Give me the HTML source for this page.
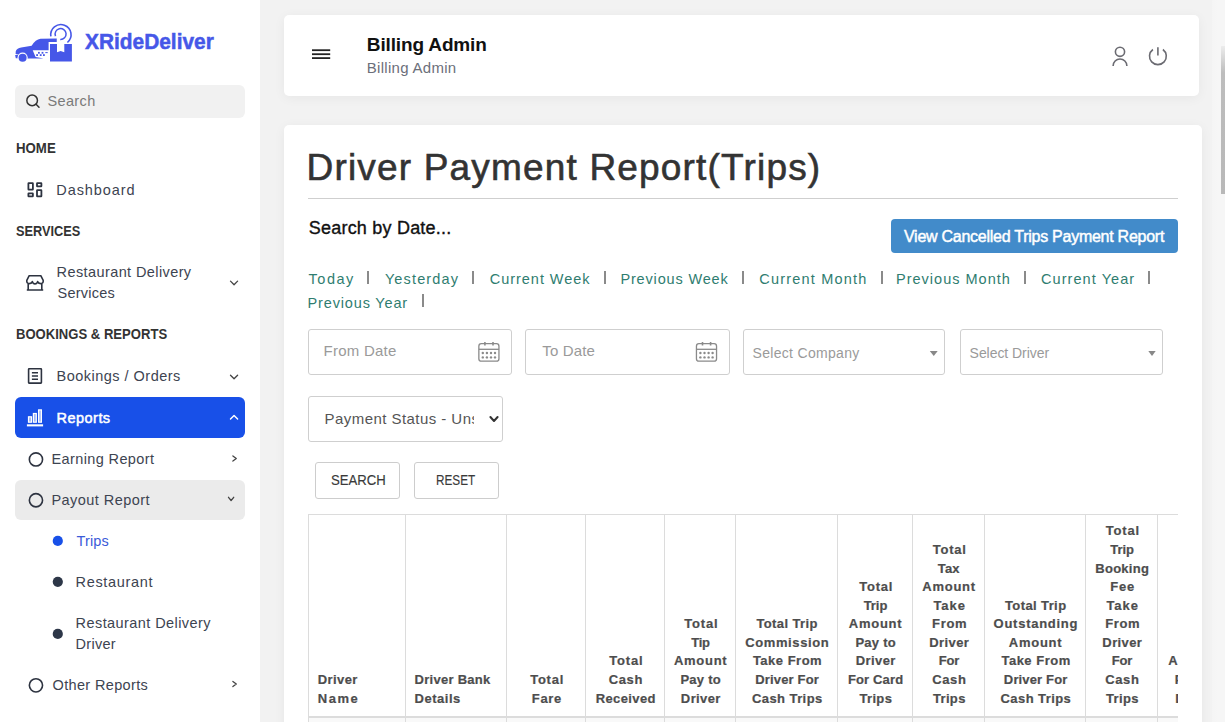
<!DOCTYPE html>
<html><head><meta charset="utf-8"><style>
html,body{margin:0;padding:0;}
body{width:1225px;height:722px;overflow:hidden;position:relative;background:#f2f2f2;font-family:"Liberation Sans", sans-serif;}
.t{position:absolute;white-space:nowrap;font-family:"Liberation Sans", sans-serif;}
.a{position:absolute;}
</style></head><body>
<!-- sidebar -->
<div class="a" style="left:0;top:0;width:260px;height:722px;background:#fff;"></div>
<!-- header card -->
<div class="a" style="left:284px;top:15px;width:915px;height:81px;background:#fff;border-radius:5px;box-shadow:0 2px 12px rgba(0,0,0,0.05);"></div>
<!-- main card -->
<div class="a" style="left:284px;top:125px;width:918px;height:640px;background:#fff;border-radius:5px;box-shadow:0 2px 12px rgba(0,0,0,0.05);"></div>

<!-- logo -->
<svg class="a" style="left:12px;top:20px" width="64" height="46" viewBox="12 20 64 46">
  <path fill="#4657e8" d="M15.6,54 L15.8,51.1 Q17,48.3 21.2,47.5 L31.65,45.7 Q35.5,39.3 40.5,38.7 L56.75,38.6 L56.75,42 L48.6,42 L48.6,50.2 L32.7,50.2 L35.6,56.9 Q40,57.4 43.5,58.5 L26,58.5 L21,55.2 L15.6,54 Z"/>
  <path fill="#4657e8" d="M15.1,55.1 L18,55.1 L18.6,58.3 L15.8,58.3 Z"/>
  <circle cx="22.6" cy="57.6" r="5.1" fill="#fff"/>
  <circle cx="22.6" cy="57.8" r="4" fill="#4657e8"/>
  <g fill="#4657e8">
    <rect x="38" y="51.9" width="1.8" height="1.8"/><rect x="41.6" y="51.9" width="1.8" height="1.8"/>
    <rect x="36.2" y="54.2" width="1.8" height="1.8"/><rect x="39.8" y="54.2" width="1.8" height="1.8"/><rect x="43" y="54.2" width="1.8" height="1.8"/>
    <rect x="45.3" y="52.1" width="2.4" height="1"/>
  </g>
  <path fill="#4657e8" d="M50,44 H57 V52.2 L60.65,51 L64.3,52.2 V44 H71.9 V61.5 H50 Z"/>
  <path d="M50.9,36.4 A10.15,10.15 0 1 1 67.4,42.5" stroke="#4657e8" stroke-width="1.6" fill="none"/>
  <path d="M55.5,36.1 A5.5,5.5 0 1 1 60.25,39.5" stroke="#4657e8" stroke-width="1.5" fill="none"/>
</svg>

<!-- search box -->
<div class="a" style="left:15px;top:85px;width:230px;height:33px;background:#f1f1f1;border-radius:6px;"></div>
<svg class="a" style="left:0;top:0" width="260" height="722" viewBox="0 0 260 722">
  <g fill="none" stroke="#333" stroke-width="1.5">
    <circle cx="32.15" cy="100.4" r="5.3"/>
    <path d="M36.1,104.3 L39,107.3" stroke-linecap="round"/>
  </g>
  <!-- dashboard icon -->
  <g fill="none" stroke="#2d3340" stroke-width="1.8">
    <rect x="28.4" y="183.2" width="4.5" height="6.4" rx="0.3"/>
    <rect x="37" y="183.2" width="4.4" height="3.2" rx="0.3"/>
    <rect x="28.4" y="193.4" width="4.5" height="3" rx="0.3"/>
    <rect x="37" y="190.2" width="4.4" height="6.2" rx="0.3"/>
  </g>
  <!-- store icon -->
  <g fill="none" stroke="#2d3340" stroke-width="1.6" stroke-linejoin="round">
    <path d="M29.2,275.7 H40.8 L43.2,280.4 Q43.6,283.6 40.6,283.6 Q38.2,283.6 37.6,281.6 Q37,283.9 35,283.9 Q33,283.9 32.4,281.6 Q31.8,283.6 29.4,283.6 Q26.4,283.6 26.8,280.4 Z"/>
    <path d="M28.2,284 V290 M41.8,284 V290 M26.8,290 H43.2"/>
  </g>
  <!-- bookings icon -->
  <g fill="none" stroke="#2d3340" stroke-width="1.6">
    <rect x="28.6" y="368.8" width="12.8" height="14.3" rx="0.5"/>
    <path d="M31.9,372.7 H38 M31.9,375.9 H38 M31.9,379.2 H38" stroke-width="1.5"/>
  </g>
</svg>

<!-- Reports active bar -->
<div class="a" style="left:15px;top:397px;width:230px;height:41px;background:#1850e8;border-radius:6px;"></div>
<!-- Payout gray -->
<div class="a" style="left:15px;top:480px;width:230px;height:40px;background:#ebebeb;border-radius:6px;"></div>

<svg class="a" style="left:0;top:0" width="260" height="722" viewBox="0 0 260 722">
  <!-- reports icon -->
  <g fill="rgba(255,255,255,0.6)" stroke="#fff" stroke-width="1.2">
    <rect x="28.5" y="416.8" width="3" height="5.4"/>
    <rect x="33.4" y="413.5" width="2.9" height="8.7"/>
    <rect x="38.6" y="409.9" width="2.8" height="12.3"/>
  </g>
  <rect x="26.9" y="424.3" width="16.2" height="2.1" fill="#fff"/>
  <!-- chevrons -->
  <g fill="none" stroke="#444" stroke-width="1.3" stroke-linecap="round" stroke-linejoin="round">
    <path d="M230.5,281.1 L234.05,284.7 L237.6,281.1"/>
    <path d="M230.5,375.2 L234.05,378.8 L237.6,375.2"/>
    <path d="M232.9,455.9 L236.3,458.45 L232.9,461"/>
    <path d="M228.5,497.3 L231.1,500.5 L233.7,497.3"/>
    <path d="M232.9,681.5 L236.3,684.05 L232.9,686.6"/>
  </g>
  <path d="M230.5,419.1 L234.05,415.4 L237.6,419.1" fill="none" stroke="#fff" stroke-width="1.4" stroke-linecap="round" stroke-linejoin="round"/>
  <!-- circles -->
  <g fill="none" stroke="#2d3340" stroke-width="1.6">
    <circle cx="35.95" cy="459.45" r="6.6"/>
    <circle cx="35.95" cy="500.25" r="6.6"/>
    <circle cx="35.95" cy="685.35" r="6.6"/>
  </g>
  <circle cx="57.8" cy="540.9" r="5.1" fill="#1850e8"/>
  <circle cx="57.8" cy="581.8" r="5.1" fill="#2d3748"/>
  <circle cx="57.8" cy="633.9" r="5.1" fill="#2d3748"/>
</svg>

<!-- header icons -->
<svg class="a" style="left:280px;top:0" width="945" height="100" viewBox="280 0 945 100">
  <g fill="#222">
    <rect x="312" y="49.3" width="18.2" height="1.8"/>
    <rect x="312" y="53.3" width="18.2" height="1.8"/>
    <rect x="312" y="57.2" width="18.2" height="1.8"/>
  </g>
  <g fill="none" stroke="#6b6b72" stroke-width="1.6">
    <circle cx="1120" cy="51.8" r="4.6"/>
    <path d="M1113.1,65.9 A6.9,6.9 0 0 1 1126.9,65.9"/>
    <path d="M1152.9,49.5 A8.4,8.4 0 1 0 1162.9,49.5"/>
    <path d="M1157.9,47.3 V55.6"/>
  </g>
</svg>

<!-- hr -->
<div class="a" style="left:308px;top:197.5px;width:870px;height:1px;background:#cfcfcf;"></div>
<!-- view cancelled button -->
<div class="a" style="left:891px;top:219px;width:287px;height:33.5px;background:#428bca;border-radius:4px;"></div>

<!-- separators -->
<div class="a" style="left:367px;top:271px;width:2px;height:12.5px;background:#8a8a8a;"></div>
<div class="a" style="left:472px;top:271px;width:2px;height:12.5px;background:#8a8a8a;"></div>
<div class="a" style="left:604px;top:271px;width:2px;height:12.5px;background:#8a8a8a;"></div>
<div class="a" style="left:742px;top:271px;width:2px;height:12.5px;background:#8a8a8a;"></div>
<div class="a" style="left:880.5px;top:271px;width:2px;height:12.5px;background:#8a8a8a;"></div>
<div class="a" style="left:1024px;top:271px;width:2px;height:12.5px;background:#8a8a8a;"></div>
<div class="a" style="left:1148px;top:271px;width:2px;height:12.5px;background:#8a8a8a;"></div>
<div class="a" style="left:422px;top:294.3px;width:2px;height:12.5px;background:#8a8a8a;"></div>

<!-- inputs -->
<div class="a" style="left:308px;top:329px;width:202px;height:44px;border:1px solid #cfcfcf;border-radius:3px;"></div>
<div class="a" style="left:525px;top:329px;width:203px;height:44px;border:1px solid #cfcfcf;border-radius:3px;"></div>
<div class="a" style="left:743px;top:329px;width:200px;height:44px;border:1px solid #cfcfcf;border-radius:3px;"></div>
<div class="a" style="left:960px;top:329px;width:201px;height:44px;border:1px solid #cfcfcf;border-radius:3px;"></div>
<div class="a" style="left:308px;top:396px;width:193px;height:44px;border:1px solid #cfcfcf;border-radius:3px;"></div>
<div class="a" style="left:315px;top:462px;width:83px;height:35px;border:1px solid #cdcdcd;border-radius:3px;"></div>
<div class="a" style="left:414px;top:462px;width:83px;height:35px;border:1px solid #cdcdcd;border-radius:3px;"></div>

<svg class="a" style="left:300px;top:320px" width="900" height="120" viewBox="300 320 900 120">
  <g id="cal1" fill="none" stroke="#8a8a8a" stroke-width="1.3">
    <rect x="478.85" y="343.7" width="20.1" height="17.5" rx="2.5"/>
    <path d="M478.85,349.3 H498.95"/>
    <path d="M484.9,342 V345.5 M493,342 V345.5" stroke-width="1.6"/>
  </g>
  <g fill="#8a8a8a">
    <circle cx="482.8" cy="353" r="1.2"/><circle cx="486.9" cy="353" r="1.2"/><circle cx="491" cy="353" r="1.2"/><circle cx="495" cy="353" r="1.2"/>
    <circle cx="482.8" cy="357.4" r="1.2"/><circle cx="486.9" cy="357.4" r="1.2"/><circle cx="491" cy="357.4" r="1.2"/><circle cx="495" cy="357.4" r="1.2"/>
  </g>
  <g transform="translate(217.6,0)">
    <g fill="none" stroke="#8a8a8a" stroke-width="1.3">
      <rect x="478.85" y="343.7" width="20.1" height="17.5" rx="2.5"/>
      <path d="M478.85,349.3 H498.95"/>
      <path d="M484.9,342 V345.5 M493,342 V345.5" stroke-width="1.6"/>
    </g>
    <g fill="#8a8a8a">
      <circle cx="482.8" cy="353" r="1.2"/><circle cx="486.9" cy="353" r="1.2"/><circle cx="491" cy="353" r="1.2"/><circle cx="495" cy="353" r="1.2"/>
      <circle cx="482.8" cy="357.4" r="1.2"/><circle cx="486.9" cy="357.4" r="1.2"/><circle cx="491" cy="357.4" r="1.2"/><circle cx="495" cy="357.4" r="1.2"/>
    </g>
  </g>
  <path d="M929.8,351 H937.7 L933.75,356 Z" fill="#888"/>
  <path d="M1148.3,351 H1155.7 L1152,356 Z" fill="#888"/>
  <path d="M490.4,417 L494,421 L497.6,417" fill="none" stroke="#333" stroke-width="2" stroke-linecap="round" stroke-linejoin="round"/>
</svg>

<div class="t" style="left:85.4px;top:30px;font-size:22px;line-height:24.58px;color:#4657e8;font-weight:700;transform:scaleX(0.9488);transform-origin:0 0;-webkit-text-stroke:0.5px #4657e8;">XRideDeliver</div>
<div class="t" style="left:47.4px;top:93px;font-size:14.5px;line-height:16.2px;color:#7a7a7a;letter-spacing:0.38px;">Search</div>
<div class="t" style="left:15.9px;top:141px;font-size:14px;line-height:15.64px;color:#333;font-weight:700;transform:scaleX(0.9457);transform-origin:0 0;">HOME</div>
<div class="t" style="left:56.3px;top:182px;font-size:14.5px;line-height:16.2px;color:#3d4451;letter-spacing:0.93px;">Dashboard</div>
<div class="t" style="left:15.8px;top:224px;font-size:14px;line-height:15.64px;color:#333;font-weight:700;transform:scaleX(0.9116);transform-origin:0 0;">SERVICES</div>
<div class="t" style="left:56.6px;top:264px;font-size:14.5px;line-height:16.2px;color:#3d4451;letter-spacing:0.4px;">Restaurant Delivery</div>
<div class="t" style="left:57.6px;top:285px;font-size:14.5px;line-height:16.2px;color:#3d4451;letter-spacing:0.21px;">Services</div>
<div class="t" style="left:15.9px;top:327px;font-size:14px;line-height:15.64px;color:#333;font-weight:700;transform:scaleX(0.9340);transform-origin:0 0;">BOOKINGS &amp; REPORTS</div>
<div class="t" style="left:56.6px;top:368px;font-size:14.5px;line-height:16.2px;color:#3d4451;letter-spacing:0.48px;">Bookings / Orders</div>
<div class="t" style="left:56.6px;top:410px;font-size:14.5px;line-height:16.2px;color:#fff;letter-spacing:0.46px;-webkit-text-stroke:0.5px #fff;">Reports</div>
<div class="t" style="left:51.5px;top:451px;font-size:14.5px;line-height:16.2px;color:#3d4451;letter-spacing:0.38px;">Earning Report</div>
<div class="t" style="left:51.5px;top:492px;font-size:14.5px;line-height:16.2px;color:#3d4451;letter-spacing:0.44px;">Payout Report</div>
<div class="t" style="left:76.6px;top:533px;font-size:14.5px;line-height:16.2px;color:#3a5bd9;letter-spacing:0.12px;">Trips</div>
<div class="t" style="left:75.6px;top:574px;font-size:14.5px;line-height:16.2px;color:#3d4451;letter-spacing:0.66px;">Restaurant</div>
<div class="t" style="left:75.6px;top:615px;font-size:14.5px;line-height:16.2px;color:#3d4451;letter-spacing:0.42px;">Restaurant Delivery</div>
<div class="t" style="left:75.6px;top:636px;font-size:14.5px;line-height:16.2px;color:#3d4451;letter-spacing:0.27px;">Driver</div>
<div class="t" style="left:52.5px;top:677px;font-size:14.5px;line-height:16.2px;color:#3d4451;letter-spacing:0.35px;">Other Reports</div>
<div class="t" style="left:366.8px;top:34px;font-size:19px;line-height:21.23px;color:#111;font-weight:700;letter-spacing:-0.14px;">Billing Admin</div>
<div class="t" style="left:366.8px;top:60px;font-size:15px;line-height:16.76px;color:#6c6f7a;letter-spacing:0.29px;">Billing Admin</div>
<div class="t" style="left:306.5px;top:147px;font-size:37px;line-height:41.34px;color:#333;letter-spacing:1.18px;-webkit-text-stroke:0.6px #333;">Driver Payment Report(Trips)</div>
<div class="t" style="left:308.8px;top:218px;font-size:18px;line-height:20.11px;color:#111;letter-spacing:0.21px;-webkit-text-stroke:0.35px #111;">Search by Date...</div>
<div class="t" style="left:904px;top:228px;font-size:16px;line-height:17.88px;color:#fff;letter-spacing:-0.26px;-webkit-text-stroke:0.45px #fff;">View Cancelled Trips Payment Report</div>
<div class="t" style="left:308.6px;top:271px;font-size:14.5px;line-height:16.2px;color:#2f7d70;letter-spacing:1.49px;">Today</div>
<div class="t" style="left:384.9px;top:271px;font-size:14.5px;line-height:16.2px;color:#2f7d70;letter-spacing:1.14px;">Yesterday</div>
<div class="t" style="left:489.8px;top:271px;font-size:14.5px;line-height:16.2px;color:#2f7d70;letter-spacing:0.96px;">Current Week</div>
<div class="t" style="left:620.4px;top:271px;font-size:14.5px;line-height:16.2px;color:#2f7d70;letter-spacing:0.84px;">Previous Week</div>
<div class="t" style="left:759.3px;top:271px;font-size:14.5px;line-height:16.2px;color:#2f7d70;letter-spacing:1.2px;">Current Month</div>
<div class="t" style="left:896px;top:271px;font-size:14.5px;line-height:16.2px;color:#2f7d70;letter-spacing:1.01px;">Previous Month</div>
<div class="t" style="left:1041px;top:271px;font-size:14.5px;line-height:16.2px;color:#2f7d70;letter-spacing:1.07px;">Current Year</div>
<div class="t" style="left:307.6px;top:295px;font-size:14.5px;line-height:16.2px;color:#2f7d70;letter-spacing:0.84px;">Previous Year</div>
<div class="t" style="left:323.5px;top:343px;font-size:15px;line-height:16.76px;color:#9a9a9a;letter-spacing:0.25px;">From Date</div>
<div class="t" style="left:542.3px;top:343px;font-size:15px;line-height:16.76px;color:#9a9a9a;letter-spacing:0.16px;">To Date</div>
<div class="t" style="left:752.5px;top:346px;font-size:14px;line-height:15.64px;color:#9a9a9a;letter-spacing:0.31px;">Select Company</div>
<div class="t" style="left:969.6px;top:346px;font-size:14px;line-height:15.64px;color:#9a9a9a;letter-spacing:-0.05px;">Select Driver</div>
<div class="t" style="left:330.7px;top:473px;font-size:14px;line-height:15.64px;color:#3a3a3a;transform:scaleX(0.9382);transform-origin:0 0;-webkit-text-stroke:0.15px #3a3a3a;">SEARCH</div>
<div class="t" style="left:436.06px;top:473px;font-size:14px;line-height:15.64px;color:#3a3a3a;transform:scaleX(0.8390);transform-origin:0 0;-webkit-text-stroke:0.15px #3a3a3a;">RESET</div>
<div class="a" style="left:0;top:0;width:1178px;height:722px;overflow:hidden">
<div class="a" style="left:308px;top:718px;width:900px;height:10px;background:#f9f9f9;"></div>
<div class="a" style="left:308px;top:514px;width:900px;height:1px;background:#dcdcdc;"></div>
<div class="a" style="left:308px;top:716px;width:900px;height:2px;background:#dcdcdc;"></div>
<div class="a" style="left:308px;top:514px;width:1px;height:220px;background:#dcdcdc;"></div>
<div class="a" style="left:405px;top:514px;width:1px;height:220px;background:#dcdcdc;"></div>
<div class="a" style="left:506px;top:514px;width:1px;height:220px;background:#dcdcdc;"></div>
<div class="a" style="left:585px;top:514px;width:1px;height:220px;background:#dcdcdc;"></div>
<div class="a" style="left:664px;top:514px;width:1px;height:220px;background:#dcdcdc;"></div>
<div class="a" style="left:735px;top:514px;width:1px;height:220px;background:#dcdcdc;"></div>
<div class="a" style="left:837px;top:514px;width:1px;height:220px;background:#dcdcdc;"></div>
<div class="a" style="left:912px;top:514px;width:1px;height:220px;background:#dcdcdc;"></div>
<div class="a" style="left:984px;top:514px;width:1px;height:220px;background:#dcdcdc;"></div>
<div class="a" style="left:1085px;top:514px;width:1px;height:220px;background:#dcdcdc;"></div>
<div class="a" style="left:1157px;top:514px;width:1px;height:220px;background:#dcdcdc;"></div>

<div class="t" style="left:317.8px;top:673px;font-size:13px;line-height:14.52px;color:#4d4d4d;font-weight:700;letter-spacing:0.4px;-webkit-text-stroke:0.2px #4d4d4d;">Driver</div>
<div class="t" style="left:317.8px;top:692px;font-size:13px;line-height:14.52px;color:#4d4d4d;font-weight:700;letter-spacing:1.51px;-webkit-text-stroke:0.2px #4d4d4d;">Name</div>
<div class="t" style="left:414.6px;top:673px;font-size:13px;line-height:14.52px;color:#4d4d4d;font-weight:700;letter-spacing:0.27px;-webkit-text-stroke:0.2px #4d4d4d;">Driver Bank</div>
<div class="t" style="left:414.6px;top:692px;font-size:13px;line-height:14.52px;color:#4d4d4d;font-weight:700;letter-spacing:0.5px;-webkit-text-stroke:0.2px #4d4d4d;">Details</div>
<div class="t" style="left:530.15px;top:673px;font-size:13px;line-height:14.52px;color:#4d4d4d;font-weight:700;letter-spacing:0.78px;-webkit-text-stroke:0.2px #4d4d4d;">Total</div>
<div class="t" style="left:531.85px;top:692px;font-size:13px;line-height:14.52px;color:#4d4d4d;font-weight:700;letter-spacing:0.66px;-webkit-text-stroke:0.2px #4d4d4d;">Fare</div>
<div class="t" style="left:609.3px;top:654px;font-size:13px;line-height:14.52px;color:#4d4d4d;font-weight:700;letter-spacing:0.78px;-webkit-text-stroke:0.2px #4d4d4d;">Total</div>
<div class="t" style="left:608.7px;top:673px;font-size:13px;line-height:14.52px;color:#4d4d4d;font-weight:700;letter-spacing:0.65px;-webkit-text-stroke:0.2px #4d4d4d;">Cash</div>
<div class="t" style="left:595.7px;top:692px;font-size:13px;line-height:14.52px;color:#4d4d4d;font-weight:700;letter-spacing:0.38px;-webkit-text-stroke:0.2px #4d4d4d;">Received</div>
<div class="t" style="left:684.3px;top:617px;font-size:13px;line-height:14.52px;color:#4d4d4d;font-weight:700;letter-spacing:0.78px;-webkit-text-stroke:0.2px #4d4d4d;">Total</div>
<div class="t" style="left:691.3px;top:636px;font-size:13px;line-height:14.52px;color:#4d4d4d;font-weight:700;letter-spacing:-0.36px;-webkit-text-stroke:0.2px #4d4d4d;">Tip</div>
<div class="t" style="left:673.9px;top:654px;font-size:13px;line-height:14.52px;color:#4d4d4d;font-weight:700;letter-spacing:0.73px;-webkit-text-stroke:0.2px #4d4d4d;">Amount</div>
<div class="t" style="left:680.45px;top:673px;font-size:13px;line-height:14.52px;color:#4d4d4d;font-weight:700;letter-spacing:0.25px;-webkit-text-stroke:0.2px #4d4d4d;">Pay to</div>
<div class="t" style="left:680.85px;top:692px;font-size:13px;line-height:14.52px;color:#4d4d4d;font-weight:700;letter-spacing:0.4px;-webkit-text-stroke:0.2px #4d4d4d;">Driver</div>
<div class="t" style="left:756.4px;top:617px;font-size:13px;line-height:14.52px;color:#4d4d4d;font-weight:700;letter-spacing:0.4px;-webkit-text-stroke:0.2px #4d4d4d;">Total Trip</div>
<div class="t" style="left:745.25px;top:636px;font-size:13px;line-height:14.52px;color:#4d4d4d;font-weight:700;letter-spacing:0.6px;-webkit-text-stroke:0.2px #4d4d4d;">Commission</div>
<div class="t" style="left:752.9px;top:654px;font-size:13px;line-height:14.52px;color:#4d4d4d;font-weight:700;letter-spacing:0.5px;-webkit-text-stroke:0.2px #4d4d4d;">Take From</div>
<div class="t" style="left:755.3px;top:673px;font-size:13px;line-height:14.52px;color:#4d4d4d;font-weight:700;letter-spacing:0.15px;-webkit-text-stroke:0.2px #4d4d4d;">Driver For</div>
<div class="t" style="left:752px;top:692px;font-size:13px;line-height:14.52px;color:#4d4d4d;font-weight:700;letter-spacing:0.42px;-webkit-text-stroke:0.2px #4d4d4d;">Cash Trips</div>
<div class="t" style="left:859.25px;top:580px;font-size:13px;line-height:14.52px;color:#4d4d4d;font-weight:700;letter-spacing:0.78px;-webkit-text-stroke:0.2px #4d4d4d;">Total</div>
<div class="t" style="left:863.65px;top:599px;font-size:13px;line-height:14.52px;color:#4d4d4d;font-weight:700;letter-spacing:-0.03px;-webkit-text-stroke:0.2px #4d4d4d;">Trip</div>
<div class="t" style="left:848.85px;top:617px;font-size:13px;line-height:14.52px;color:#4d4d4d;font-weight:700;letter-spacing:0.73px;-webkit-text-stroke:0.2px #4d4d4d;">Amount</div>
<div class="t" style="left:855.4px;top:636px;font-size:13px;line-height:14.52px;color:#4d4d4d;font-weight:700;letter-spacing:0.25px;-webkit-text-stroke:0.2px #4d4d4d;">Pay to</div>
<div class="t" style="left:855.8px;top:654px;font-size:13px;line-height:14.52px;color:#4d4d4d;font-weight:700;letter-spacing:0.4px;-webkit-text-stroke:0.2px #4d4d4d;">Driver</div>
<div class="t" style="left:847.95px;top:673px;font-size:13px;line-height:14.52px;color:#4d4d4d;font-weight:700;letter-spacing:0.14px;-webkit-text-stroke:0.2px #4d4d4d;">For Card</div>
<div class="t" style="left:859.45px;top:692px;font-size:13px;line-height:14.52px;color:#4d4d4d;font-weight:700;letter-spacing:0.34px;-webkit-text-stroke:0.2px #4d4d4d;">Trips</div>
<div class="t" style="left:932.75px;top:543px;font-size:13px;line-height:14.52px;color:#4d4d4d;font-weight:700;letter-spacing:0.78px;-webkit-text-stroke:0.2px #4d4d4d;">Total</div>
<div class="t" style="left:937.85px;top:562px;font-size:13px;line-height:14.52px;color:#4d4d4d;font-weight:700;letter-spacing:0.1px;-webkit-text-stroke:0.2px #4d4d4d;">Tax</div>
<div class="t" style="left:922.35px;top:580px;font-size:13px;line-height:14.52px;color:#4d4d4d;font-weight:700;letter-spacing:0.73px;-webkit-text-stroke:0.2px #4d4d4d;">Amount</div>
<div class="t" style="left:933.4px;top:599px;font-size:13px;line-height:14.52px;color:#4d4d4d;font-weight:700;letter-spacing:0.95px;-webkit-text-stroke:0.2px #4d4d4d;">Take</div>
<div class="t" style="left:932.1px;top:617px;font-size:13px;line-height:14.52px;color:#4d4d4d;font-weight:700;letter-spacing:0.65px;-webkit-text-stroke:0.2px #4d4d4d;">From</div>
<div class="t" style="left:929.3px;top:636px;font-size:13px;line-height:14.52px;color:#4d4d4d;font-weight:700;letter-spacing:0.4px;-webkit-text-stroke:0.2px #4d4d4d;">Driver</div>
<div class="t" style="left:938.8px;top:654px;font-size:13px;line-height:14.52px;color:#4d4d4d;font-weight:700;letter-spacing:-0.19px;-webkit-text-stroke:0.2px #4d4d4d;">For</div>
<div class="t" style="left:932.15px;top:673px;font-size:13px;line-height:14.52px;color:#4d4d4d;font-weight:700;letter-spacing:0.65px;-webkit-text-stroke:0.2px #4d4d4d;">Cash</div>
<div class="t" style="left:932.95px;top:692px;font-size:13px;line-height:14.52px;color:#4d4d4d;font-weight:700;letter-spacing:0.34px;-webkit-text-stroke:0.2px #4d4d4d;">Trips</div>
<div class="t" style="left:1004.95px;top:599px;font-size:13px;line-height:14.52px;color:#4d4d4d;font-weight:700;letter-spacing:0.4px;-webkit-text-stroke:0.2px #4d4d4d;">Total Trip</div>
<div class="t" style="left:993.6px;top:617px;font-size:13px;line-height:14.52px;color:#4d4d4d;font-weight:700;letter-spacing:0.73px;-webkit-text-stroke:0.2px #4d4d4d;">Outstanding</div>
<div class="t" style="left:1008.85px;top:636px;font-size:13px;line-height:14.52px;color:#4d4d4d;font-weight:700;letter-spacing:0.73px;-webkit-text-stroke:0.2px #4d4d4d;">Amount</div>
<div class="t" style="left:1001.45px;top:654px;font-size:13px;line-height:14.52px;color:#4d4d4d;font-weight:700;letter-spacing:0.5px;-webkit-text-stroke:0.2px #4d4d4d;">Take From</div>
<div class="t" style="left:1003.85px;top:673px;font-size:13px;line-height:14.52px;color:#4d4d4d;font-weight:700;letter-spacing:0.15px;-webkit-text-stroke:0.2px #4d4d4d;">Driver For</div>
<div class="t" style="left:1000.55px;top:692px;font-size:13px;line-height:14.52px;color:#4d4d4d;font-weight:700;letter-spacing:0.42px;-webkit-text-stroke:0.2px #4d4d4d;">Cash Trips</div>
<div class="t" style="left:1105.8px;top:524px;font-size:13px;line-height:14.52px;color:#4d4d4d;font-weight:700;letter-spacing:0.78px;-webkit-text-stroke:0.2px #4d4d4d;">Total</div>
<div class="t" style="left:1110.2px;top:543px;font-size:13px;line-height:14.52px;color:#4d4d4d;font-weight:700;letter-spacing:-0.03px;-webkit-text-stroke:0.2px #4d4d4d;">Trip</div>
<div class="t" style="left:1095.3px;top:562px;font-size:13px;line-height:14.52px;color:#4d4d4d;font-weight:700;letter-spacing:0.26px;-webkit-text-stroke:0.2px #4d4d4d;">Booking</div>
<div class="t" style="left:1110.3px;top:580px;font-size:13px;line-height:14.52px;color:#4d4d4d;font-weight:700;letter-spacing:0.71px;-webkit-text-stroke:0.2px #4d4d4d;">Fee</div>
<div class="t" style="left:1106.45px;top:599px;font-size:13px;line-height:14.52px;color:#4d4d4d;font-weight:700;letter-spacing:0.95px;-webkit-text-stroke:0.2px #4d4d4d;">Take</div>
<div class="t" style="left:1105.15px;top:617px;font-size:13px;line-height:14.52px;color:#4d4d4d;font-weight:700;letter-spacing:0.65px;-webkit-text-stroke:0.2px #4d4d4d;">From</div>
<div class="t" style="left:1102.35px;top:636px;font-size:13px;line-height:14.52px;color:#4d4d4d;font-weight:700;letter-spacing:0.4px;-webkit-text-stroke:0.2px #4d4d4d;">Driver</div>
<div class="t" style="left:1111.85px;top:654px;font-size:13px;line-height:14.52px;color:#4d4d4d;font-weight:700;letter-spacing:-0.19px;-webkit-text-stroke:0.2px #4d4d4d;">For</div>
<div class="t" style="left:1105.2px;top:673px;font-size:13px;line-height:14.52px;color:#4d4d4d;font-weight:700;letter-spacing:0.65px;-webkit-text-stroke:0.2px #4d4d4d;">Cash</div>
<div class="t" style="left:1106px;top:692px;font-size:13px;line-height:14.52px;color:#4d4d4d;font-weight:700;letter-spacing:0.34px;-webkit-text-stroke:0.2px #4d4d4d;">Trips</div>
<div class="t" style="left:1168.3px;top:654px;font-size:13px;line-height:14.52px;color:#4d4d4d;font-weight:700;letter-spacing:0.73px;-webkit-text-stroke:0.2px #4d4d4d;">Amount</div>
<div class="t" style="left:1174.85px;top:673px;font-size:13px;line-height:14.52px;color:#4d4d4d;font-weight:700;letter-spacing:0.25px;-webkit-text-stroke:0.2px #4d4d4d;">Pay to</div>
<div class="t" style="left:1175.25px;top:692px;font-size:13px;line-height:14.52px;color:#4d4d4d;font-weight:700;letter-spacing:0.4px;-webkit-text-stroke:0.2px #4d4d4d;">Driver</div>
</div>
<div class="a" style="left:0;top:0;width:474px;height:722px;overflow:hidden">
<div class="t" style="left:324.5px;top:411px;font-size:15px;line-height:16.76px;color:#555;letter-spacing:0.45px;">Payment Status - Unset</div>
</div>
<div class="a" style="left:1212px;top:0;width:13px;height:722px;background:linear-gradient(90deg,rgba(246,246,246,0.6),#f6f6f6 40%);"></div>
<div class="a" style="left:1221px;top:46px;width:4px;height:148px;background:linear-gradient(#ececec,#bdbdbd 18%,#b8b8b8);"></div>

</body></html>
